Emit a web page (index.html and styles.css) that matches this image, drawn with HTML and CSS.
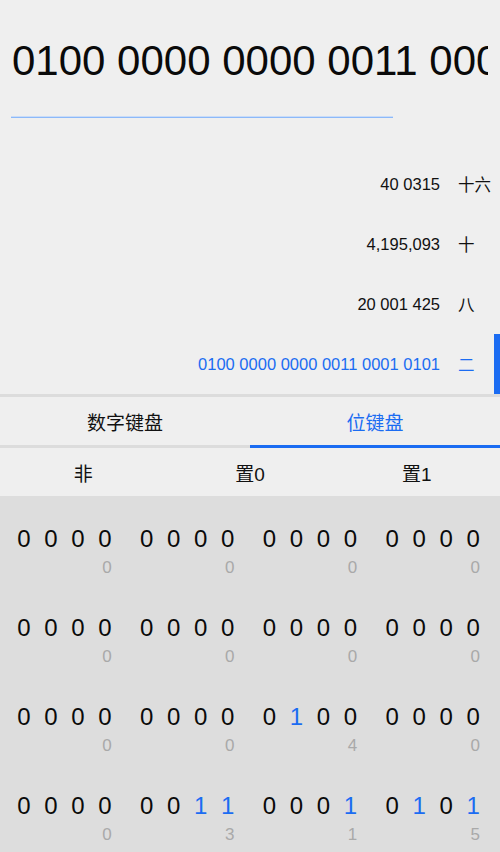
FILE: index.html
```html
<!DOCTYPE html>
<html lang="zh-CN">
<head>
<meta charset="utf-8">
<title>程序员计算器</title>
<link rel="stylesheet" href="styles.css">
</head>
<body>
<div class="app">
  <section class="display">
    <div class="big-number">0100 0000 0000 0011 0001 0101</div>
    <div class="input-line"></div>
  </section>

  <section class="bases">
    <div class="base-row">
      <span class="base-value">40 0315</span>
      <span class="base-label">十六</span>
      <span class="base-bar"></span>
    </div>
    <div class="base-row">
      <span class="base-value">4,195,093</span>
      <span class="base-label">十</span>
      <span class="base-bar"></span>
    </div>
    <div class="base-row">
      <span class="base-value">20 001 425</span>
      <span class="base-label">八</span>
      <span class="base-bar"></span>
    </div>
    <div class="base-row active">
      <span class="base-value">0100 0000 0000 0011 0001 0101</span>
      <span class="base-label">二</span>
      <span class="base-bar"></span>
    </div>
  </section>

  <nav class="tabs">
    <div class="tab">数字键盘</div>
    <div class="tab selected">位键盘</div>
  </nav>

  <div class="ops">
    <div class="op">非</div>
    <div class="op">置0</div>
    <div class="op">置1</div>
  </div>

  <section class="bits">
    <div class="bit-row">
      <div class="nibble"><span class="bit">0</span><span class="bit">0</span><span class="bit">0</span><span class="bit">0</span><span class="hex">0</span></div>
      <div class="nibble"><span class="bit">0</span><span class="bit">0</span><span class="bit">0</span><span class="bit">0</span><span class="hex">0</span></div>
      <div class="nibble"><span class="bit">0</span><span class="bit">0</span><span class="bit">0</span><span class="bit">0</span><span class="hex">0</span></div>
      <div class="nibble"><span class="bit">0</span><span class="bit">0</span><span class="bit">0</span><span class="bit">0</span><span class="hex">0</span></div>
    </div>
    <div class="bit-row">
      <div class="nibble"><span class="bit">0</span><span class="bit">0</span><span class="bit">0</span><span class="bit">0</span><span class="hex">0</span></div>
      <div class="nibble"><span class="bit">0</span><span class="bit">0</span><span class="bit">0</span><span class="bit">0</span><span class="hex">0</span></div>
      <div class="nibble"><span class="bit">0</span><span class="bit">0</span><span class="bit">0</span><span class="bit">0</span><span class="hex">0</span></div>
      <div class="nibble"><span class="bit">0</span><span class="bit">0</span><span class="bit">0</span><span class="bit">0</span><span class="hex">0</span></div>
    </div>
    <div class="bit-row">
      <div class="nibble"><span class="bit">0</span><span class="bit">0</span><span class="bit">0</span><span class="bit">0</span><span class="hex">0</span></div>
      <div class="nibble"><span class="bit">0</span><span class="bit">0</span><span class="bit">0</span><span class="bit">0</span><span class="hex">0</span></div>
      <div class="nibble"><span class="bit">0</span><span class="bit on">1</span><span class="bit">0</span><span class="bit">0</span><span class="hex">4</span></div>
      <div class="nibble"><span class="bit">0</span><span class="bit">0</span><span class="bit">0</span><span class="bit">0</span><span class="hex">0</span></div>
    </div>
    <div class="bit-row">
      <div class="nibble"><span class="bit">0</span><span class="bit">0</span><span class="bit">0</span><span class="bit">0</span><span class="hex">0</span></div>
      <div class="nibble"><span class="bit">0</span><span class="bit">0</span><span class="bit on">1</span><span class="bit on">1</span><span class="hex">3</span></div>
      <div class="nibble"><span class="bit">0</span><span class="bit">0</span><span class="bit">0</span><span class="bit on">1</span><span class="hex">1</span></div>
      <div class="nibble"><span class="bit">0</span><span class="bit on">1</span><span class="bit">0</span><span class="bit on">1</span><span class="hex">5</span></div>
    </div>
  </section>
</div>
</body>
</html>
```

FILE: styles.css
```css
* {
  box-sizing: border-box;
}

html, body {
  margin: 0;
  padding: 0;
  background: #efefef;
}

body {
  font-family: "Liberation Sans", "Noto Sans CJK SC", sans-serif;
  color: #111111;
}

.app {
  width: 500px;
  height: 852px;
  overflow: hidden;
  display: flex;
  flex-direction: column;
}

/* ---------- display ---------- */
.display {
  padding-top: 40px;
}

.big-number {
  margin: 0 12px 0 12px;
  font-size: 42px;
  line-height: 42px;
  height: 42px;
  white-space: nowrap;
  overflow: hidden;
  color: #0a0a0a;
}

.input-line {
  margin: 34px 0 0 11px;
  width: 382px;
  height: 2px;
  border-top: 1px solid #c9dcf8;
  background: #8cb9f9;
}

/* ---------- bases ---------- */
.bases {
  padding-top: 36px;
  display: flex;
  flex-direction: column;
}

.base-row {
  height: 60px;
  display: flex;
  align-items: center;
  justify-content: flex-end;
  font-size: 16.5px;
}

.base-value {
  white-space: nowrap;
}

.base-label {
  width: 36px;
  margin-left: 18px;
  font-family: "Noto Sans CJK SC", sans-serif;
  font-size: 16.5px;
}

.base-bar {
  width: 6px;
  align-self: stretch;
}

.base-row.active .base-value,
.base-row.active .base-label {
  color: #1b6cf2;
}

.base-row.active .base-bar {
  background: #1b6cf2;
}

/* ---------- tabs ---------- */
.tabs {
  border-top: 3px solid #dcdcdc;
  display: flex;
}

.tab {
  flex: 1;
  height: 51px;
  display: flex;
  align-items: center;
  justify-content: center;
  font-family: "Noto Sans CJK SC", sans-serif;
  font-size: 19px;
  border-bottom: 3px solid #dcdcdc;
}

.tab.selected {
  color: #1b6cf2;
  border-bottom-color: #1b6cf2;
}

/* ---------- ops ---------- */
.ops {
  display: flex;
  height: 48px;
}

.op {
  flex: 1;
  display: flex;
  align-items: center;
  justify-content: center;
  font-family: "Liberation Sans", "Noto Sans CJK SC", sans-serif;
  font-size: 19px;
}

/* ---------- bits ---------- */
.bits {
  flex: 1;
  background: #dddddd;
  display: flex;
  flex-direction: column;
}

.bit-row {
  height: 89px;
  padding: 29px 6px 0 3px;
  display: flex;
}

.nibble {
  flex: 1;
  display: grid;
  grid-template-columns: repeat(4, 27px);
  grid-template-rows: 28px 20px;
  row-gap: 5px;
  justify-content: center;
}

.bit {
  font-size: 24px;
  line-height: 28px;
  text-align: center;
  color: #0a0a0a;
}

.bit.on {
  color: #1b6cf2;
}

.hex {
  grid-column: 4;
  grid-row: 2;
  font-size: 17px;
  line-height: 20px;
  text-align: center;
  padding-left: 4px;
  color: #a9a9a9;
}
```
